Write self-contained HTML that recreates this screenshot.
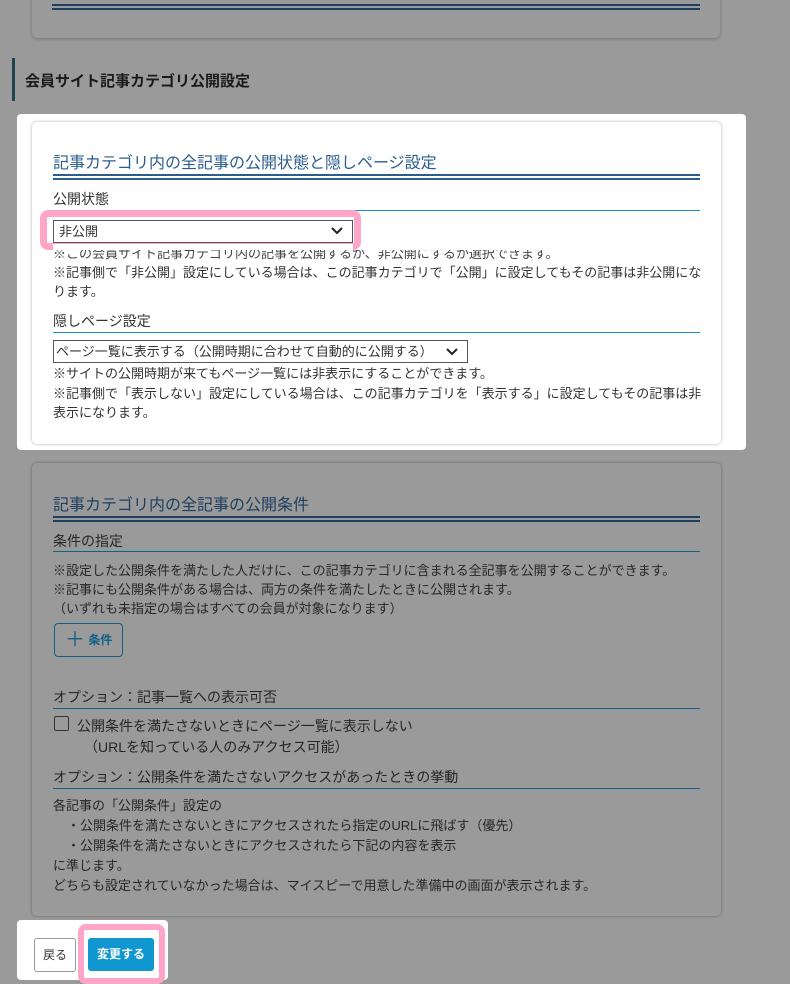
<!DOCTYPE html>
<html><head><meta charset="utf-8"><style>
*{box-sizing:border-box;margin:0;padding:0}
body{width:790px;height:982px;background:#9a9a9a;font-family:"Liberation Sans","Noto Sans CJK JP",sans-serif;color:#333;position:relative;overflow:hidden}
.a{position:absolute;white-space:nowrap}
.card{position:absolute;border-radius:5px}
.t{font-size:16px;color:#2b5d8e}
.dl{position:absolute;height:6px;border-top:2px solid #2b5d8e;border-bottom:2px solid #2b5d8e}
.l{position:absolute;height:1px;background:#1a8fc9}
.s13{font-size:13px;line-height:19px}
.s14{font-size:14px}
.g{color:#262626}
.g .t{color:#1e3f60}
.g .dl{border-color:#1e3f60}
.g .l{background:#135f85}
</style></head><body>
<div class="card" style="left:32px;top:-10px;width:688px;height:48px;background:#9a9a9a;box-shadow:0 1px 3px rgba(0,0,0,.25)"></div>
<div class="dl" style="left:52px;top:4px;width:648px;border-color:#1e3f60"></div>
<div class="a" style="left:12px;top:58px;width:3px;height:43px;background:#1d4550"></div>
<div class="a" style="left:25px;top:70px;font-size:15px;font-weight:bold;color:#1a1a1a">会員サイト記事カテゴリ公開設定</div>
<div class="a" style="left:17px;top:114px;width:729px;height:336px;background:#fff;border-radius:4px"></div>
<div class="card" style="left:32px;top:122px;width:689px;height:322px;background:#fff;box-shadow:0 0 3px rgba(0,0,0,.3)"></div>
<div class="a t" style="left:53px;top:149px">記事カテゴリ内の全記事の公開状態と隠しページ設定</div>
<div class="dl" style="left:53px;top:174px;width:647px"></div>
<div class="a s14" style="left:53px;top:189px">公開状態</div>
<div class="l" style="left:53px;top:210px;width:647px"></div>
<div class="a" style="left:40px;top:210px;width:321px;height:40px;border:7px solid #ffa6c8;border-radius:8px;background:#fff"></div>
<div class="a" style="left:53px;top:220px;width:300px;height:23px;border:1px solid #555;font-size:13px;line-height:21px;padding-left:5px">非公開</div>
<svg class="a" style="left:331px;top:226px" width="12" height="10"><path d="M1 2 L6 7 L11 2" stroke="#222" stroke-width="2" fill="none"/></svg>
<div class="a s13" style="left:53px;top:244px;color:#444;clip-path:inset(6px 0 0 0)">※この会員サイト記事カテゴリ内の記事を公開するか、非公開にするか選択できます。</div>
<div class="a s13" style="left:53px;top:244px;width:300px;height:6px;background:#fff"></div>
<div class="a s13" style="left:53px;top:263px">※記事側で「非公開」設定にしている場合は、この記事カテゴリで「公開」に設定してもその記事は非公開にな</div>
<div class="a s13" style="left:53px;top:282px">ります。</div>
<div class="a s14" style="left:53px;top:311px">隠しページ設定</div>
<div class="l" style="left:53px;top:332px;width:647px"></div>
<div class="a" style="left:53px;top:340px;width:415px;height:23px;border:1px solid #555;font-size:13px;line-height:21px;padding-left:2px">ページ一覧に表示する（公開時期に合わせて自動的に公開する）</div>
<svg class="a" style="left:446px;top:347px" width="12" height="10"><path d="M1 2 L6 7 L11 2" stroke="#222" stroke-width="2" fill="none"/></svg>
<div class="a s13" style="left:53px;top:364px">※サイトの公開時期が来てもページ一覧には非表示にすることができます。</div>
<div class="a s13" style="left:53px;top:384px">※記事側で「表示しない」設定にしている場合は、この記事カテゴリを「表示する」に設定してもその記事は非</div>
<div class="a s13" style="left:53px;top:403px">表示になります。</div>
<div class="g">
<div class="card" style="left:32px;top:463px;width:689px;height:453px;background:#9a9a9a;box-shadow:0 0 3px rgba(0,0,0,.35)"></div>
<div class="a t" style="left:53px;top:491px">記事カテゴリ内の全記事の公開条件</div>
<div class="dl" style="left:53px;top:516px;width:647px"></div>
<div class="a s14" style="left:53px;top:531px">条件の指定</div>
<div class="l" style="left:53px;top:551px;width:647px"></div>
<div class="a s13" style="left:53px;top:561px">※設定した公開条件を満たした人だけに、この記事カテゴリに含まれる全記事を公開することができます。</div>
<div class="a s13" style="left:53px;top:580px">※記事にも公開条件がある場合は、両方の条件を満たしたときに公開されます。</div>
<div class="a s13" style="left:53px;top:599px">（いずれも未指定の場合はすべての会員が対象になります）</div>
<div class="a" style="left:54px;top:623px;width:69px;height:34px;border:1px solid #135f85;border-radius:4px;color:#135f85;font-size:12px;font-weight:bold;line-height:32px;padding-left:10px"><span style="font-size:20px;font-weight:normal;vertical-align:-2px">＋</span> 条件</div>
<div class="a s14" style="left:53px;top:687px">オプション：記事一覧への表示可否</div>
<div class="l" style="left:53px;top:708px;width:647px"></div>
<div class="a" style="left:54px;top:716px;width:15px;height:15px;border:1px solid #333;border-radius:2px"></div>
<div class="a s14" style="left:77px;top:716px">公開条件を満たさないときにページ一覧に表示しない</div>
<div class="a s14" style="left:84px;top:737px">（URLを知っている人のみアクセス可能）</div>
<div class="a s14" style="left:53px;top:767px">オプション：公開条件を満たさないアクセスがあったときの挙動</div>
<div class="l" style="left:53px;top:788px;width:647px"></div>
<div class="a s13" style="left:53px;top:796px">各記事の「公開条件」設定の</div>
<div class="a s13" style="left:67px;top:816px">・公開条件を満たさないときにアクセスされたら指定のURLに飛ばす（優先）</div>
<div class="a s13" style="left:67px;top:836px">・公開条件を満たさないときにアクセスされたら下記の内容を表示</div>
<div class="a s13" style="left:53px;top:856px">に準じます。</div>
<div class="a s13" style="left:53px;top:876px">どちらも設定されていなかった場合は、マイスピーで用意した準備中の画面が表示されます。</div>
</div>
<div class="a" style="left:17px;top:920px;width:151px;height:60px;background:#fff;border-radius:4px"></div>
<div class="a" style="left:34px;top:938px;width:42px;height:34px;border:1px solid #999;border-radius:3px;font-size:12px;line-height:32px;text-align:center;background:#fff">戻る</div>
<div class="a" style="left:78px;top:924px;width:87px;height:60px;border:6px solid #ffa6c8;border-radius:8px;background:#fff"></div>
<div class="a" style="left:88px;top:938px;width:66px;height:33px;background:#1197cf;border-radius:3px;color:#fff;font-size:12px;font-weight:bold;line-height:33px;text-align:center">変更する</div>
</body></html>
